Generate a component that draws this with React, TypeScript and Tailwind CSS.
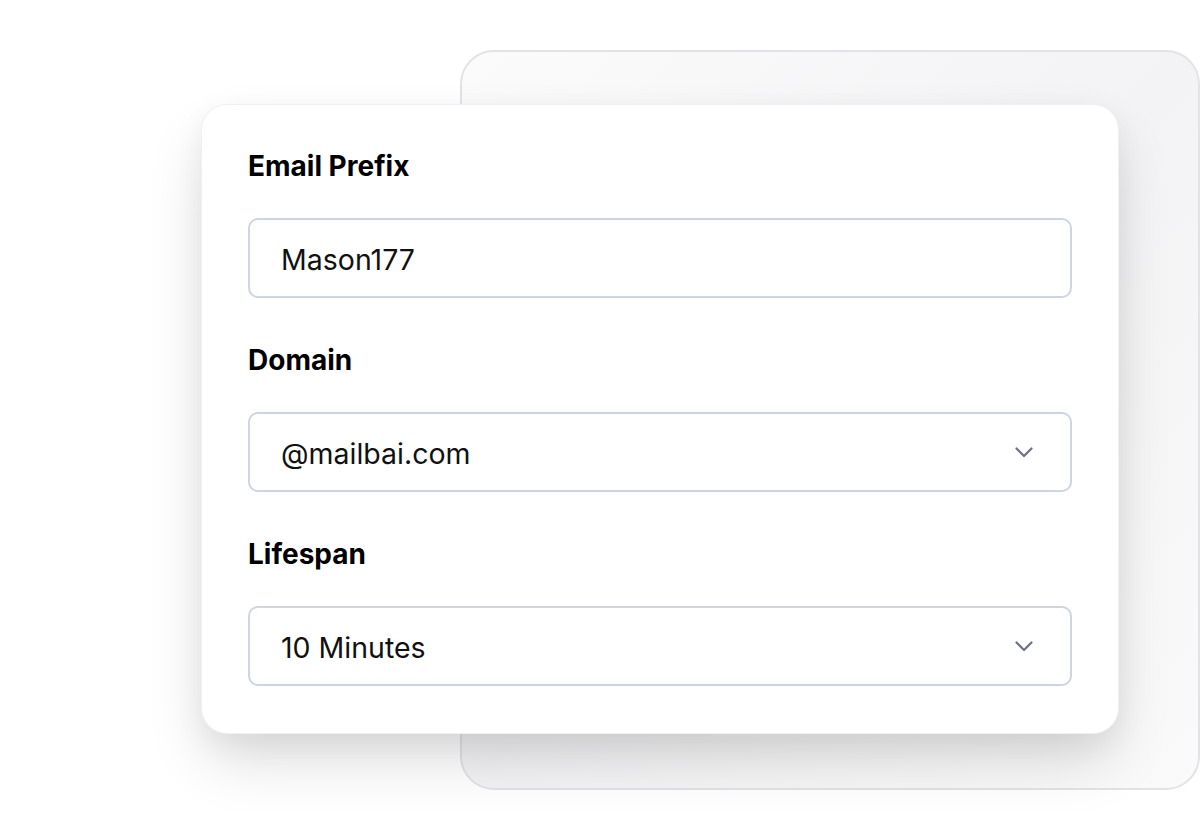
import React from "react";

function Chevron() {
  return (
    <svg width="18" height="11" viewBox="0 0 18 11" fill="none" stroke="#6b7280" strokeWidth="2.2" strokeLinecap="round" strokeLinejoin="round">
      <path d="M1.5 1.5L9 9l7.5-7.5" />
    </svg>
  );
}

function Field({ label, value, select }: { label: string; value: string; select?: boolean }) {
  return (
    <div className="flex flex-col">
      <div className="text-[28px] leading-[32px] font-bold text-black">{label}</div>
      <div className="mt-[36px] h-[80px] rounded-[10px] border-2 border-[#cdd5df] bg-white flex items-center justify-between pl-[31px] pr-[37px]">
        <span className="text-[28.5px] leading-[36px] pt-[3px] text-[#111111]">{value}</span>
        {select && <Chevron />}
      </div>
    </div>
  );
}

export default function App() {
  return (
    <div className="relative w-[1200px] h-[840px] bg-white overflow-hidden" style={{ fontFamily: "Inter, 'Noto Sans', sans-serif" }}>
      <div className="absolute left-[460px] top-[50px] w-[740px] h-[740px] rounded-[34px] border-2 border-[#e2e3e8] bg-gradient-to-br from-[#fbfbfc] via-[#f3f3f5] to-[#fafafa]" />
      <div className="absolute left-[201px] top-[104px] w-[918px] h-[630px] rounded-[26px] border border-[#eef0f3] bg-white px-[46px] pt-[45px] shadow-[0_30px_60px_-5px_rgba(0,0,0,0.14),0_10px_30px_rgba(0,0,0,0.05)]">
        <div className="flex flex-col gap-[46px]">
          <Field label="Email Prefix" value="Mason177" />
          <Field label="Domain" value="@mailbai.com" select />
          <Field label="Lifespan" value="10 Minutes" select />
        </div>
      </div>
    </div>
  );
}
